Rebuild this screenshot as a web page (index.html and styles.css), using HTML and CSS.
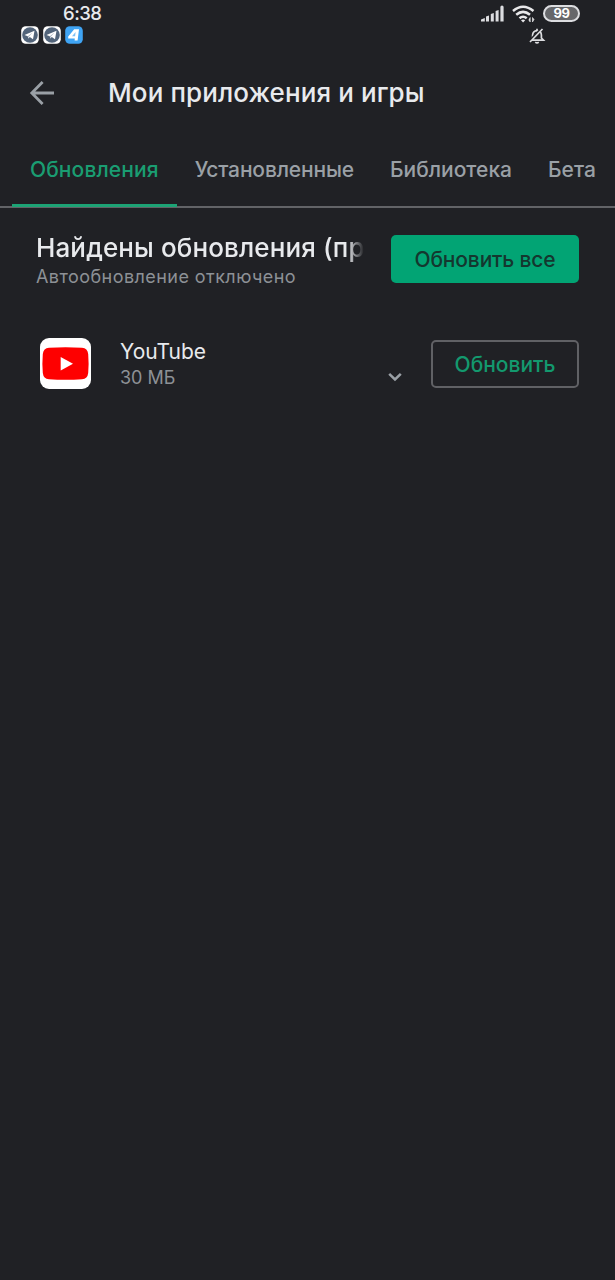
FILE: index.html
```html
<!DOCTYPE html>
<html lang="ru">
<head>
    <meta charset="UTF-8">
    <meta name="viewport" content="width=device-width, initial-scale=1.0">
    <title>Мои приложения и игры</title>
    <link rel="stylesheet" href="styles.css">
</head>
<body>
    <div class="status-bar">
        <div class="status-left">
            <div class="clock">6:38</div>
            <div class="notifications">
                <svg class="notification" viewBox="0 0 18 18">
                    <rect x="0.2" y="0.2" width="17.6" height="17.6" rx="4.5" fill="#fff"/>
                    <circle cx="9" cy="9" r="7.8" fill="#52647a"/>
                    <path d="M3.5 9 13.5 4.8 12 13.3 8.8 11 7.3 12.6 6.8 10.2z" fill="#fff"/>
                    <path d="M6.8 10.2 11.5 6.6 7.8 10.8 7.3 12.6z" fill="#a8b3c0"/>
                </svg>
                <svg class="notification" viewBox="0 0 18 18">
                    <rect x="0.2" y="0.2" width="17.6" height="17.6" rx="4.5" fill="#fff"/>
                    <circle cx="9" cy="9" r="7.8" fill="#52647a"/>
                    <path d="M3.5 9 13.5 4.8 12 13.3 8.8 11 7.3 12.6 6.8 10.2z" fill="#fff"/>
                    <path d="M6.8 10.2 11.5 6.6 7.8 10.8 7.3 12.6z" fill="#a8b3c0"/>
                </svg>
                <svg class="notification" viewBox="0 0 18 18">
                    <rect x="0.2" y="0.2" width="17.6" height="17.6" rx="4.5" fill="#3fa4f4"/>
                    <path d="M9.2 3.2H14L12.6 14.4H9.6L9.8 12.6H3.2V10.6z" fill="#fff"/>
                    <path d="M10.6 6 10.1 10.2H7z" fill="#7cc0f7"/>
                </svg>
            </div>
        </div>
        <div class="status-right">
            <div class="indicators">
                <svg class="signal" viewBox="0 0 24 18">
                    <path d="M0 16.5v-2L3.8 13v3.5zM5 16.5v-5l3-1v6zM9.8 16.5V9l3-1v8.5zM14.6 16.5V6l3-1v11.5zM19.4 16.5V2q0-1.5 1.6-1.5T22.6 2v14.5z" fill="#dcdde0"/>
                </svg>
                <svg class="wifi" viewBox="0 0 24 18">
                    <g fill="none" stroke="#e8e8ea" stroke-width="2.5">
                        <path d="M1 6Q11 -2.5 21.5 6"/>
                        <path d="M4.2 9.8Q11 4 18 9.8"/>
                        <path d="M7.5 13.3Q11 10.2 14.7 13.3"/>
                    </g>
                    <path d="M9 15.2q2-1.6 4.2 0L11.1 17.6z" fill="#e8e8ea"/>
                    <path d="M18.2 12.5v4.5l-1.4-2zM20.5 17v-4.5l1.5 2z" fill="#e8e8ea" stroke="#e8e8ea" stroke-width="0.6"/>
                </svg>
                <div class="battery">99</div>
            </div>
            <svg class="muted" viewBox="0 0 18 18" fill="none" stroke="#dcdde0" stroke-width="1.7">
                <path d="M3 13.2 4.6 11V8Q5 3.8 9 3.6 13.2 3.8 13.4 8V11L15.5 13.2zM9 1.8v2M7.3 15.2Q9 16.7 10.7 15.2"/>
                <path d="M1.5 14 13.5 1.5" stroke="#202125" stroke-width="2.4"/>
                <path d="M2 15 14.5 2"/>
            </svg>
        </div>
    </div>

    <header class="toolbar">
        <svg class="back" viewBox="0 0 26 26" fill="none" stroke="#9aa0a6" stroke-width="2.8">
            <path d="M25 13H3M13.6 2 2.8 13 13.6 24"/>
        </svg>
        <h1 class="title">Мои приложения и игры</h1>
    </header>

    <nav class="tabs">
        <div class="tab active">Обновления</div>
        <div class="tab tab-long">Установленные</div>
        <div class="tab">Библиотека</div>
        <div class="tab">Бета</div>
    </nav>

    <main>
        <section class="summary">
            <div class="summary-text">
                <h2 class="heading">Найдены обновления (пр</h2>
                <p class="subheading">Автообновление отключено</p>
            </div>
            <button class="button button-filled">Обновить все</button>
        </section>

        <section class="app">
            <svg class="app-icon" viewBox="0 0 51 51">
                <rect width="51" height="51" rx="9" fill="#fff"/>
                <path d="M9 9.8Q25.5 8.6 42 9.8 47.6 10.2 48.2 16 49 25.5 48.2 35 47.6 40.8 42 41.2 25.5 42.4 9 41.2 3.4 40.8 2.8 35 2 25.5 2.8 16 3.4 10.2 9 9.8z" fill="#fe0000"/>
                <path d="M20.7 19 33 25.8 20.7 32.5z" fill="#fff"/>
            </svg>
            <div class="app-info">
                <div class="app-name">YouTube</div>
                <div class="app-size">30 МБ</div>
            </div>
            <svg class="chevron" viewBox="0 0 14 10" fill="none" stroke="#9aa0a6" stroke-width="2.5">
                <path d="M1.2 1.8 7 7.5 12.8 1.8"/>
            </svg>
            <button class="button button-outlined">Обновить</button>
        </section>
    </main>
</body>
</html>
```

FILE: styles.css
```css
* {
    box-sizing: border-box;
}

body {
    margin: 0;
    min-height: 100vh;
    background: #202125;
    color: #e8eaed;
    font-family: Inter, Roboto, sans-serif;
    overflow-x: hidden;
}

h1, h2, p {
    margin: 0;
    font-weight: 500;
    white-space: nowrap;
}

svg {
    display: block;
    flex-shrink: 0;
}

/* Status bar */
.status-bar {
    display: flex;
    justify-content: space-between;
    height: 50px;
    padding: 4px 35px 0 21px;
}

.clock {
    height: 20px;
    padding-left: 42px;
    font-size: 18.5px;
    font-weight: 500;
    line-height: 19px;
    letter-spacing: -0.5px;
}

.notifications {
    display: flex;
    gap: 4px;
    margin-top: 2px;
}

.notification {
    width: 18px;
    height: 18px;
}

.status-right {
    display: flex;
    flex-direction: column;
}

.indicators {
    display: flex;
    align-items: center;
    height: 19px;
}

.signal {
    width: 24px;
    height: 18px;
    margin-right: 7px;
}

.wifi {
    width: 24px;
    height: 18px;
    margin-right: 7px;
}

.battery {
    width: 37px;
    height: 17px;
    border: 2px solid #dcdde0;
    border-radius: 9px;
    background: #66676a;
    color: #fff;
    font-size: 13px;
    font-weight: 700;
    line-height: 13px;
    letter-spacing: -0.5px;
    text-align: center;
}

.muted {
    width: 18px;
    height: 18px;
    margin: 4px 0 0 47px;
}

/* Toolbar */
.toolbar {
    display: flex;
    align-items: center;
    height: 86px;
    padding-left: 29px;
}

.back {
    width: 26px;
    height: 26px;
    margin-right: 53px;
}

.title {
    font-size: 26px;
    line-height: 32px;
    letter-spacing: 0.1px;
}

/* Tabs */
.tabs {
    display: flex;
    height: 72px;
    padding-left: 12px;
    border-bottom: 2px solid #626367;
}

.tab {
    height: 71px;
    padding: 21px 18px 0;
    color: #9aa0a6;
    font-size: 21px;
    font-weight: 500;
    line-height: 26px;
    white-space: nowrap;
}

.tab.active {
    border-bottom: 3px solid #1ca375;
    color: #1a9d72;
    letter-spacing: 0.1px;
}

.tab-long {
    letter-spacing: -0.15px;
}

/* Updates */
.summary {
    display: flex;
    justify-content: space-between;
    align-items: flex-start;
    height: 74px;
    padding: 27px 36px 0;
}

.summary-text {
    width: 328px;
    margin-top: -2px;
}

.heading {
    font-size: 26px;
    line-height: 30px;
    letter-spacing: 0.12px;
    -webkit-mask-image: linear-gradient(to right, #000 95%, transparent);
    mask-image: linear-gradient(to right, #000 95%, transparent);
}

.subheading {
    margin-top: 2px;
    color: #8d9196;
    font-size: 18px;
    font-weight: 400;
    line-height: 24px;
    letter-spacing: 0.44px;
}

.button {
    height: 48px;
    padding: 0;
    border: none;
    border-radius: 5px;
    font-family: inherit;
    font-size: 21px;
    font-weight: 500;
    white-space: nowrap;
}

.button-filled {
    width: 188px;
    background: #02a474;
    color: #14372f;
    letter-spacing: -0.15px;
}

.button-outlined {
    width: 148px;
    border: 2px solid #606165;
    background: transparent;
    color: #13996e;
}

.app {
    display: flex;
    align-items: center;
    padding: 55px 36px 0 40px;
}

.app-icon {
    width: 51px;
    height: 51px;
    margin-bottom: 1px;
}

.app-info {
    flex: 1;
    padding: 2px 0 0 29px;
}

.app-name {
    font-size: 21px;
    line-height: 26px;
}

.app-size {
    color: #8d9196;
    font-size: 18px;
    line-height: 26px;
}

.chevron {
    width: 14px;
    height: 10px;
    margin: 26px 29px 0 0;
}
```
